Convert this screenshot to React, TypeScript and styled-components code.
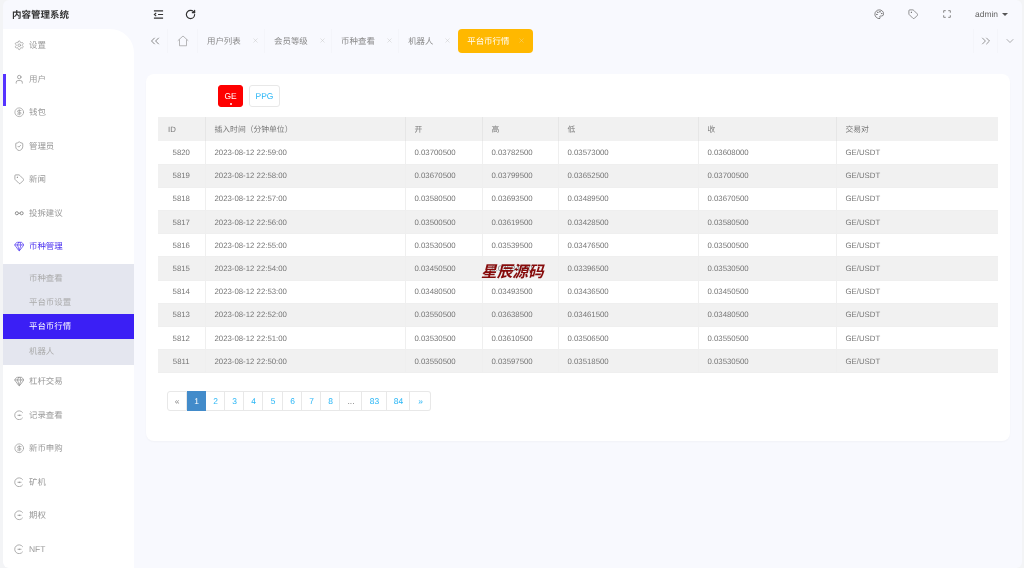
import * as React from "react";
import styled, { createGlobalStyle } from "styled-components";
import {
  CircleDollarSign,
  ChevronDown,
  ChevronsLeft,
  ChevronsRight,
  Gem,
  Palette,
  RotateCw,
  Settings,
  ShieldCheck,
  Tag,
  User,
  X,
} from "lucide-react";

const GlobalStyle = createGlobalStyle`
  html, body {
    margin: 0;
    height: 100%;
    overflow: hidden;
    background: #f3f4f6;
    font-family: "Liberation Sans", "Noto Sans CJK SC", sans-serif;
    text-rendering: geometricPrecision;
  }
`;

const Page = styled.div`
  position: relative;
  width: 1024px;
  height: 568px;
  box-sizing: border-box;
  padding: 0 2px 0 2.5px;
  overflow: hidden;
  background: #f3f4f6;
  will-change: transform;
`;

const Shell = styled.div`
  height: 100%;
  display: flex;
  flex-direction: column;
  overflow: hidden;
  background: #f8f9fe;
  border-radius: 6px;
`;

const TopBar = styled.div`
  height: 29px;
  box-sizing: border-box;
  padding-bottom: 1px;
  flex-shrink: 0;
  display: flex;
  align-items: center;
`;

const Brand = styled.div`
  width: 131.5px;
  padding-left: 9.5px;
  box-sizing: border-box;
  font-size: 9.5px;
  font-weight: bold;
  color: #333;
`;

const TopTools = styled.div`
  display: flex;
  align-items: center;
  gap: 21.5px;
  padding-left: 18.5px;
  color: #333;
`;

const TopRight = styled.div`
  margin-left: auto;
  display: flex;
  align-items: center;
  gap: 23.5px;
  padding-right: 14px;
  color: #666;
`;

const UserName = styled.div`
  display: flex;
  align-items: center;
  gap: 4px;
  font-size: 8.45px;
  color: #666;
`;

const Caret = styled.span`
  width: 0;
  height: 0;
  border-left: 3px solid transparent;
  border-right: 3px solid transparent;
  border-top: 3.5px solid #555;
`;

const Body = styled.div`
  flex: 1;
  display: flex;
  min-height: 0;
`;

const Sidebar = styled.nav`
  width: 131.5px;
  flex-shrink: 0;
  background: #fff;
  border-radius: 0 24px 0 6px;
  overflow: hidden;
`;

const MenuItem = styled.div<{ $open?: boolean; $marked?: boolean }>`
  position: relative;
  height: 33.5px;
  box-sizing: border-box;
  padding: 0 0 1px 11px;
  display: flex;
  align-items: center;
  gap: 5px;
  font-size: 8.45px;
  color: ${({ $open }) => ($open ? "#4a30f0" : "#999")};

  ${({ $marked }) =>
    $marked &&
    `
    &::before {
      content: "";
      position: absolute;
      left: 0;
      top: 11.5px;
      width: 3.2px;
      height: 32px;
      background: #5533ff;
    }
  `}
`;

const SubMenu = styled.div`
  padding: 2px 0;
  background: #e4e6ef;
`;

const SubItem = styled.div<{ $active?: boolean }>`
  height: 24.4px;
  box-sizing: border-box;
  display: flex;
  align-items: center;
  padding: 0 0 0 26.5px;
  font-size: 8.45px;
  color: ${({ $active }) => ($active ? "#fff" : "#aaa")};
  background: ${({ $active }) => ($active ? "#3b1ff5" : "transparent")};
`;

const Main = styled.main`
  flex: 1;
  min-width: 0;
  display: flex;
  flex-direction: column;
`;

const TabBar = styled.div`
  height: 24px;
  flex-shrink: 0;
  display: flex;
  align-items: center;
  padding-left: 8px;
`;

const TabIcon = styled.div<{ $w: number; $plain?: boolean }>`
  width: ${({ $w }) => $w}px;
  height: 24px;
  box-sizing: border-box;
  padding-bottom: 1px;
  display: flex;
  align-items: center;
  justify-content: center;
  color: #777;
  border-right: ${({ $plain }) => ($plain ? "none" : "1px solid #f4f5fa")};
`;

const TabItem = styled.div<{ $active?: boolean }>`
  height: 24px;
  box-sizing: border-box;
  display: flex;
  align-items: center;
  gap: ${({ $active }) => ($active ? "8.5px" : "11px")};
  padding: 0 ${({ $active }) => ($active ? "8.5px" : "5.3px")} 1px 9px;
  font-size: 8.45px;
  border-radius: ${({ $active }) => ($active ? "4px" : "0")};
  color: ${({ $active }) => ($active ? "#fff" : "#888")};
  background: ${({ $active }) => ($active ? "#ffb800" : "transparent")};
  border-right: ${({ $active }) => ($active ? "none" : "1px solid #f4f5fa")};

  svg {
    flex-shrink: 0;
    color: ${({ $active }) => ($active ? "#f0dca0" : "#c4c4c4")};
  }

  &:nth-last-child(3) {
    border-right: none;
    padding-right: 6.8px;
  }
`;

const TabEnd = styled.div`
  margin-left: auto;
  display: flex;
  border-left: 1px solid #f4f5fa;
`;

const Content = styled.div`
  margin: 21px 12px 0 12px;
  height: 367px;
  box-sizing: border-box;
  padding: 11px 12px 0;
  background: #fff;
  border-radius: 8px;
  box-shadow: 0 1px 2px rgba(0, 0, 0, 0.03);
`;

const CoinRow = styled.div`
  height: 32px;
  display: flex;
  align-items: flex-start;
  gap: 6px;
  padding-left: 60px;
`;

const CoinButton = styled.div<{ $active?: boolean }>`
  position: relative;
  height: 22px;
  width: ${({ $active }) => ($active ? "25px" : "31px")};
  box-sizing: border-box;
  display: flex;
  align-items: center;
  justify-content: center;
  font-size: 8.45px;
  border-radius: 3px;
  color: ${({ $active }) => ($active ? "#fff" : "#29b6f6")};
  background: ${({ $active }) => ($active ? "#fe0000" : "#fff")};
  border: 1px solid ${({ $active }) => ($active ? "#fe0000" : "#e8e8e8")};

  ${({ $active }) =>
    $active &&
    `
    &::after {
      content: "";
      position: absolute;
      left: 11px;
      bottom: 1px;
      width: 2px;
      height: 2px;
      background: #fff;
      border-radius: 50%;
    }
  `}
`;

const Table = styled.table`
  width: 840px;
  table-layout: fixed;
  border-collapse: collapse;
  font-size: 7.8px;
  color: #777;
`;

const HeadCell = styled.th<{ $w: number }>`
  width: ${({ $w }) => $w}px;
  height: 24px;
  padding: 0 0 0 9px;
  box-sizing: border-box;
  text-align: left;
  font-weight: normal;
  background: #f1f1f1;
  border-right: 1px solid #e6e6e6;
  &:first-child {
    padding-left: 10px;
  }
  &:last-child {
    border-right: none;
  }
`;

const Row = styled.tr`
  &:nth-child(even) {
    background: #f1f1f1;
  }
`;

const Cell = styled.td<{ $center?: boolean }>`
  height: 23.2px;
  padding: ${({ $center }) => ($center ? "0" : "0 0 0 9px")};
  box-sizing: border-box;
  text-align: ${({ $center }) => ($center ? "center" : "left")};
  border-right: 1px solid #efefef;
  border-bottom: 1px solid #efefef;
  &:last-child {
    border-right: none;
  }
`;

const Pager = styled.div`
  display: inline-flex;
  margin: 18px 0 0 9px;
  height: 20px;
`;

const PageCell = styled.div<{ $w: number; $active?: boolean; $muted?: boolean }>`
  width: ${({ $w }) => $w}px;
  padding-left: 1px;
  display: flex;
  align-items: center;
  justify-content: center;
  font-size: 8.45px;
  box-sizing: border-box;
  border: 1px solid ${({ $active }) => ($active ? "#428bca" : "#e8e8e8")};
  border-left: none;
  color: ${({ $active, $muted }) => ($active ? "#fff" : $muted ? "#888" : "#29b6f6")};
  background: ${({ $active }) => ($active ? "#428bca" : "#fff")};
  &:first-child {
    padding-left: 0;
    border-left: 1px solid #e8e8e8;
    border-radius: 3px 0 0 3px;
  }
  &:last-child {
    border-radius: 0 3px 3px 0;
  }
`;

const Watermark = styled.div`
  position: absolute;
  left: 481px;
  top: 263px;
  font-size: 15.7px;
  line-height: 19px;
  font-style: italic;
  font-weight: bold;
  color: #860b0b;
`;

// 左侧菜单里那个带点的半圆图标
const CoinIcon = () => (
  <svg width="10.5" height="10.5" viewBox="0 0 24 24" fill="none" stroke="#999" strokeWidth="1.8">
    <path d="M20 6.5A10 10 0 1 0 20 17.5" />
    <path d="M8 12h9" />
    <circle cx="12" cy="12" r="0.8" fill="#999" />
  </svg>
);

const LinkIcon = () => (
  <svg width="10.5" height="10.5" viewBox="0 0 24 24" fill="none" stroke="#888" strokeWidth="2.2">
    <circle cx="6.5" cy="12" r="3.5" />
    <circle cx="17.5" cy="12" r="3.5" />
    <path d="M10 12h4" />
  </svg>
);

const MenuFoldIcon = () => (
  <svg width="11" height="11" viewBox="0 0 24 24" fill="none" stroke="#333" strokeWidth="2.4">
    <path d="M2 4h20M11 12h11M2 20h20M7 8.5 3 12l4 3.5" />
  </svg>
);

const FullIcon = () => (
  <svg width="10" height="10" viewBox="0 0 24 24" fill="none" stroke="#888" strokeWidth="2.4">
    <path d="M4 9V4h5M15 4h5v5M20 15v5h-5M9 20H4v-5" />
  </svg>
);

const HomeIcon = () => (
  <svg width="12" height="12" viewBox="0 0 24 24" fill="none" stroke="#999" strokeWidth="1.4">
    <path d="M1.5 11.5 12 2l10.5 9.5M5 9v12.5h14V9" />
  </svg>
);

const ic = { size: 10.5, strokeWidth: 1.6 };

const upperMenu = [
  { label: "设置", icon: <Settings {...ic} color="#999" /> },
  { label: "用户", icon: <User {...ic} color="#888" />, marked: true },
  { label: "钱包", icon: <CircleDollarSign {...ic} color="#999" /> },
  { label: "管理员", icon: <ShieldCheck {...ic} color="#888" /> },
  { label: "新闻", icon: <Tag {...ic} color="#888" /> },
  { label: "投拆建议", icon: <LinkIcon /> },
  { label: "币种管理", icon: <Gem {...ic} color="#4a30f0" />, open: true },
];

const subMenu = ["币种查看", "平台币设置", "平台币行情", "机器人"];

const lowerMenu = [
  { label: "杠杆交易", icon: <Gem {...ic} color="#888" /> },
  { label: "记录查看", icon: <CoinIcon /> },
  { label: "新币申购", icon: <CircleDollarSign {...ic} color="#999" /> },
  { label: "矿机", icon: <CoinIcon /> },
  { label: "期权", icon: <CoinIcon /> },
  { label: "NFT", icon: <CoinIcon /> },
];

const tabs = ["用户列表", "会员等级", "币种查看", "机器人"];

const columns = [
  { title: "ID", w: 47 },
  { title: "插入时间（分钟单位）", w: 200 },
  { title: "开", w: 77 },
  { title: "高", w: 76 },
  { title: "低", w: 140 },
  { title: "收", w: 138 },
  { title: "交易对", w: 162 },
];

const rows = [
  ["5820", "22:59:00", "0.03700500", "0.03782500", "0.03573000", "0.03608000"],
  ["5819", "22:58:00", "0.03670500", "0.03799500", "0.03652500", "0.03700500"],
  ["5818", "22:57:00", "0.03580500", "0.03693500", "0.03489500", "0.03670500"],
  ["5817", "22:56:00", "0.03500500", "0.03619500", "0.03428500", "0.03580500"],
  ["5816", "22:55:00", "0.03530500", "0.03539500", "0.03476500", "0.03500500"],
  ["5815", "22:54:00", "0.03450500", "0.03534500", "0.03396500", "0.03530500"],
  ["5814", "22:53:00", "0.03480500", "0.03493500", "0.03436500", "0.03450500"],
  ["5813", "22:52:00", "0.03550500", "0.03638500", "0.03461500", "0.03480500"],
  ["5812", "22:51:00", "0.03530500", "0.03610500", "0.03506500", "0.03550500"],
  ["5811", "22:50:00", "0.03550500", "0.03597500", "0.03518500", "0.03530500"],
];

const pages = [
  { t: "«", w: 20, muted: true },
  { t: "1", w: 19, active: true },
  { t: "2", w: 19 },
  { t: "3", w: 19 },
  { t: "4", w: 19 },
  { t: "5", w: 20 },
  { t: "6", w: 19 },
  { t: "7", w: 19 },
  { t: "8", w: 19 },
  { t: "...", w: 22, muted: true },
  { t: "83", w: 25 },
  { t: "84", w: 23 },
  { t: "»", w: 21 },
];

const App = () => {
  return (
    <Page>
      <GlobalStyle />
      <Shell>
        <TopBar>
          <Brand>内容管理系统</Brand>
          <TopTools>
            <MenuFoldIcon />
            <RotateCw size={11} strokeWidth={2.6} />
          </TopTools>
          <TopRight>
            <Palette size={10.5} strokeWidth={1.8} />
            <Tag size={10.5} strokeWidth={1.6} />
            <FullIcon />
            <UserName>
              admin
              <Caret />
            </UserName>
          </TopRight>
        </TopBar>
        <Body>
          <Sidebar>
            {upperMenu.map((item) => (
              <MenuItem key={item.label} $open={item.open} $marked={item.marked}>
                {item.icon}
                {item.label}
              </MenuItem>
            ))}
            <SubMenu>
              {subMenu.map((label) => (
                <SubItem key={label} $active={label === "平台币行情"}>
                  {label}
                </SubItem>
              ))}
            </SubMenu>
            {lowerMenu.map((item) => (
              <MenuItem key={item.label}>
                {item.icon}
                {item.label}
              </MenuItem>
            ))}
          </Sidebar>
          <Main>
            <TabBar>
              <TabIcon $w={26}>
                <ChevronsLeft size={14} strokeWidth={1.5} />
              </TabIcon>
              <TabIcon $w={30}>
                <HomeIcon />
              </TabIcon>
              {tabs.map((tab) => (
                <TabItem key={tab}>
                  {tab}
                  <X size={7} strokeWidth={1.5} />
                </TabItem>
              ))}
              <TabItem $active>
                平台币行情
                <X size={7} strokeWidth={1.5} />
              </TabItem>
              <TabEnd>
                <TabIcon $w={24}>
                  <ChevronsRight size={14} strokeWidth={1.3} />
                </TabIcon>
                <TabIcon $w={24} $plain>
                  <ChevronDown size={12} strokeWidth={1.2} />
                </TabIcon>
              </TabEnd>
            </TabBar>
            <Content>
              <CoinRow>
                <CoinButton $active>GE</CoinButton>
                <CoinButton>PPG</CoinButton>
              </CoinRow>
              <Table>
                <thead>
                  <tr>
                    {columns.map((col) => (
                      <HeadCell key={col.title} $w={col.w}>
                        {col.title}
                      </HeadCell>
                    ))}
                  </tr>
                </thead>
                <tbody>
                  {rows.map((r) => (
                    <Row key={r[0]}>
                      <Cell $center>{r[0]}</Cell>
                      <Cell>2023-08-12 {r[1]}</Cell>
                      <Cell>{r[2]}</Cell>
                      <Cell>{r[3]}</Cell>
                      <Cell>{r[4]}</Cell>
                      <Cell>{r[5]}</Cell>
                      <Cell>GE/USDT</Cell>
                    </Row>
                  ))}
                </tbody>
              </Table>
              <Pager>
                {pages.map((p) => (
                  <PageCell key={p.t} $w={p.w} $active={p.active} $muted={p.muted}>
                    {p.t}
                  </PageCell>
                ))}
              </Pager>
            </Content>
          </Main>
        </Body>
      </Shell>
      <Watermark>星辰源码</Watermark>
    </Page>
  );
};

export default App;
